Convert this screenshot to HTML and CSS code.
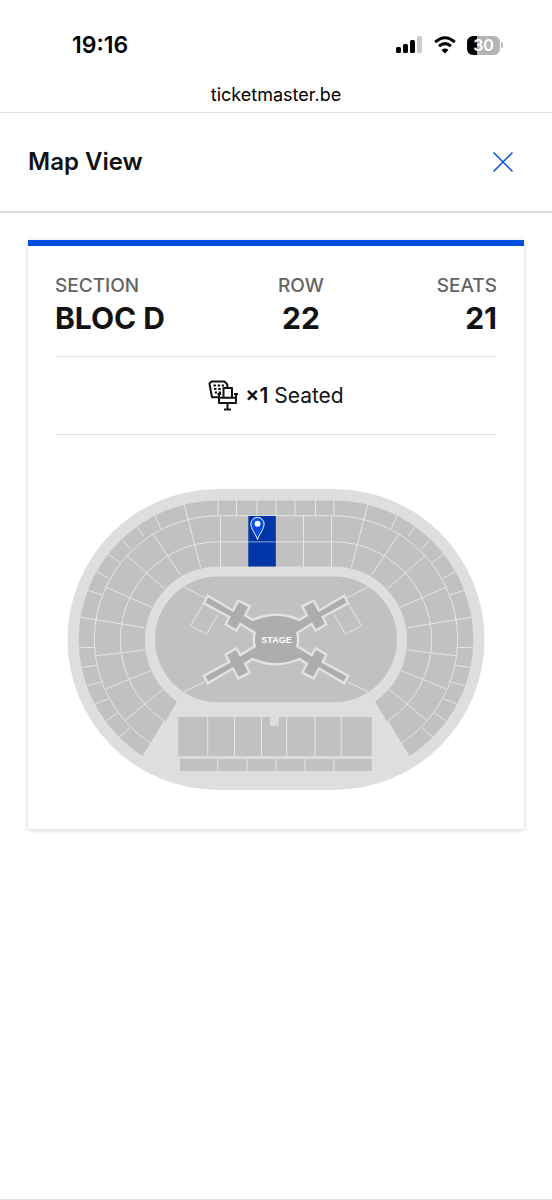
FILE: index.html
```html
<!DOCTYPE html>
<html lang="en">
<head>
<meta charset="utf-8">
<meta name="viewport" content="width=device-width, initial-scale=1">
<title>Map View</title>
<link rel="stylesheet" href="styles.css">
</head>
<body>
<div class="screen">
  <div class="browser">
    <div class="status">
      <span class="time">19:16</span>
      <div class="indicators">
        <svg class="signal" viewBox="0 0 27 18" aria-hidden="true">
          <rect x="0" y="11" width="5" height="6" rx="1.5"/>
          <rect x="7" y="8" width="5" height="9" rx="1.5"/>
          <rect x="14" y="4" width="5" height="13" rx="1.5"/>
          <rect class="dim" x="21" y="0" width="5" height="17" rx="1.5"/>
        </svg>
        <svg class="wifi" viewBox="0 0 24 18" aria-hidden="true">
          <path class="wave" d="M2.200 6.100Q12 -2.600 21.800 6.100M6 10.200Q12 5 18 10.200"/>
          <path d="M12 17.400L8.500 13.900Q12 11.200 15.500 13.900Z"/>
        </svg>
        <div class="battery"><span class="level">30</span></div>
      </div>
    </div>
    <div class="address">ticketmaster.be</div>
  </div>
  <header class="header">
    <h1 class="title">Map View</h1>
    <button class="close" type="button" aria-label="Close">
      <svg viewBox="0 0 22 22" aria-hidden="true"><path d="M1.500 1.500L20.500 20.500M20.500 1.500L1.500 20.500"/></svg>
    </button>
  </header>
  <main class="content">
    <section class="card">
      <dl class="details">
        <div class="detail"><dt>SECTION</dt><dd>BLOC D</dd></div>
        <div class="detail center"><dt>ROW</dt><dd>22</dd></div>
        <div class="detail end"><dt>SEATS</dt><dd>21</dd></div>
      </dl>
      <p class="kind">
        <svg class="seat" viewBox="0 0 31 31" aria-hidden="true">
          <path d="M19.300 7V4.500L16.400 1.400H3.600L1.400 3.400L4 17.300H11"/>
          <path d="M11 13.500V23H28V13.500M9.500 14H13M26 14H30M11 17.800H28M15.500 17.500V8H24V17.500M19.500 23V29.500M16 29.500H23"/>
          <path d="M5.500 5.500H8M9.700 5.500H12M13.700 5.500H16M6 9H8.500M10.200 9H12.700M6.700 12.500H9M10.700 12.500H13"/>
        </svg>
        <span><strong>×1</strong> Seated</span>
      </p>
      <svg class="map" viewBox="55 463 442 338" role="img" aria-label="Seat map with block D marked">
        <defs>
          <g id="wing">
            <path d="M218 500V516M236.500 500V516M257 500V516M220.500 516V567M184.300 505L200.700 567.700M155 516L160.700 528.700M152.700 533.300L180.700 575.300M137.300 526.700L143.500 536M122 539.300L130 548.700M126.700 555.300L164 588.300M108.300 554L120 562.700M96 571.300L108.700 578.300M105 586.700L151.700 607.300M87.300 590L101.300 594.700M80.700 617.300L144.700 627.700M78.700 647.800L94.300 647.300M96 655.700L145.300 650M81.700 667.300L96.700 665.300M88.300 685.300L101.700 682M105.700 689L150.700 670.700M95.300 704.300L108 699M106 721.300L116.700 713.300M125.700 720L162.300 690M119.300 737.300L130 727.700"/>
            <path d="M276 515.800H218A123.700 123.700 0 0 0 94.300 639.500A123.700 123.700 0 0 0 150.500 743.200M276 541.900H218A97.600 97.600 0 0 0 120.400 639.500A97.600 97.600 0 0 0 165 721.500"/>
            <path d="M184 587L204.500 597.500M184 692L204.500 681.500M203 604L190.500 625.700L206.700 634.300L218 614"/>
          </g>
        </defs>
        <rect class="ground" x="67.500" y="489" width="417" height="301" rx="150.500"/>
        <path class="stand" d="M142.500 756A139.300 139.300 0 0 1 78.700 639.500A139.300 139.300 0 0 1 218 500.500H334A139.300 139.300 0 0 1 473.300 639.500A139.300 139.300 0 0 1 409.500 756L388.500 721.500H387L375 701.500A73.300 73.300 0 0 0 407 639.500A73 73 0 0 0 334 566.500H218A73 73 0 0 0 145 639.500A73.300 73.300 0 0 0 177 701.500L165.500 721.500H163.500Z"/>
        <rect class="stand" x="155" y="576.500" width="242" height="125.700" rx="62.850"/>
        <path class="stand" d="M178.200 717H270V726H278.700V717H371.700V756.300H178.200ZM180 758.700H371.700V771H180Z"/>
        <g class="lines">
          <use href="#wing"/>
          <use href="#wing" transform="translate(552 0) scale(-1 1)"/>
          <path d="M276 500V516M303.500 516V567"/>
          <path d="M207.700 717V756M234.500 717V756M261.500 717V756M286.700 717V756M315 717V756M341.200 717V756M217.700 759V771M247 759V771M276 759V771M305 759V771M334 759V771"/>
        </g>
        <rect class="picked" x="248.300" y="516" width="27.500" height="50.500"/>
        <path class="picked-line" d="M248.300 541.900H275.800"/>
        <path class="stage" d="M252.500 620Q276 609.500 299.500 620L307 615.300L302.300 606.300L313.700 600.700L319 610.700L344.300 595.700L348 603.300L322.700 617L326.300 624.300L315.700 630.700L311.700 624L297.300 632.700Q299 639.500 297.300 646.300L311.700 655L315.700 648.300L326.300 654.700L322.700 662L348 675.700L344.300 683.300L319 668.300L313.700 678.300L302.300 672.700L307 663.700L299.500 659Q276 669.500 252.500 659L245 663.700L249.700 672.700L238.300 678.300L233 668.300L207.700 683.300L204 675.700L229.300 662L225.700 654.700L236.300 648.300L240.300 655L254.700 646.300Q253 639.500 254.700 632.700L240.300 624L236.300 630.700L225.700 624.300L229.300 617L204 603.300L207.700 595.700L233 610.700L238.300 600.700L249.700 606.300L245 615.300Z"/>
        <text class="stage-name" x="276.500" y="642.500">STAGE</text>
        <path class="pin" d="M257.500 539.500C255.500 533.500 250.900 529 250.900 524A6.600 6.600 0 0 1 264.100 524C264.100 529 259.500 533.500 257.500 539.500Z"/>
        <circle class="dot" cx="257.500" cy="523.800" r="3"/>
      </svg>
    </section>
  </main>
</div>
</body>
</html>
```
FILE: styles.css
```css
* { box-sizing: border-box; }

body {
  margin: 0;
  background: #fff;
  color: #121212;
  font-family: Inter, "Liberation Sans", sans-serif;
}

.screen {
  min-height: 100vh;
  border-bottom: 1px solid #dedede;
}

.browser { border-bottom: 1px solid #e2e2e2; }

.status {
  display: flex;
  align-items: center;
  justify-content: space-between;
  padding: 30px 49px 0 72px;
  color: #000;
}

.time {
  font-size: 23px;
  line-height: 30px;
  font-weight: 600;
}

.indicators {
  display: flex;
  align-items: center;
  gap: 10px;
}

.signal { width: 27px; height: 18px; }
.signal .dim { fill: #ccc; }
.wifi { width: 24px; height: 18px; }
.wifi .wave { fill: none; stroke: #000; stroke-width: 3; }

.battery {
  display: flex;
  align-items: center;
  gap: 1px;
}

.battery::after {
  content: "";
  width: 2px;
  height: 6px;
  border-radius: 0 2px 2px 0;
  background: #b5b5b5;
}

.level {
  width: 33px;
  border-radius: 6px;
  background: linear-gradient(90deg, #000 30%, #b5b5b5 30%);
  color: #fff;
  font-size: 16px;
  line-height: 19px;
  font-weight: 600;
  text-align: center;
}

.address {
  padding: 23px 0 5px;
  color: #000;
  font-size: 18px;
  line-height: 24px;
  text-align: center;
}

.header {
  display: flex;
  align-items: center;
  justify-content: space-between;
  padding: 32px 35px 32px 28px;
  border-bottom: 2px solid #dadada;
}

.title {
  margin: 0;
  font-size: 24px;
  line-height: 34px;
  font-weight: 600;
}

.close {
  display: flex;
  padding: 3px;
  border: 0;
  background: none;
}

.close svg {
  width: 22px;
  height: 22px;
  fill: none;
  stroke: #024ddf;
  stroke-width: 1.5;
}

.content { padding: 27px 28px; }

.card {
  padding: 26px 27px 28px;
  border-top: 6px solid #024ddf;
  box-shadow: 0 1px 5px rgba(0, 0, 0, 0.18);
}

.details {
  display: flex;
  justify-content: space-between;
  margin: 0;
  padding-bottom: 20px;
  border-bottom: 1px solid #e0e0e0;
}

.center { text-align: center; }
.end { text-align: right; }

dt {
  color: #646464;
  font-size: 19px;
  line-height: 28px;
  font-weight: 500;
}

dd {
  margin: 0;
  font-size: 30px;
  line-height: 36px;
  font-weight: 700;
}

.kind {
  display: flex;
  align-items: center;
  justify-content: center;
  gap: 6px;
  margin: 0;
  padding: 22px 0;
  border-bottom: 1px solid #e0e0e0;
  font-size: 21px;
  line-height: 33px;
}

.kind strong { font-weight: 600; }

.seat {
  width: 31px;
  height: 31px;
  fill: none;
  stroke: #121212;
  stroke-width: 2;
  stroke-linejoin: round;
}

.map {
  display: block;
  width: 100%;
  margin-top: 28px;
}

.ground { fill: #dedede; }
.stand { fill: #c1c1c1; }
.picked { fill: #0036a7; }
.picked-line { stroke: #8ea5d8; stroke-width: 1; }
.lines { fill: none; stroke: #e6e6e6; stroke-width: 1; }
.stage { fill: #adadad; stroke: #e2e2e2; stroke-width: 2.4; }

.stage-name {
  fill: #fff;
  font: 700 9px "Liberation Sans", Arial, sans-serif;
  text-anchor: middle;
}

.pin { fill: #024ddf; stroke: #fff; stroke-width: 1; }
.dot { fill: #fff; }
```
